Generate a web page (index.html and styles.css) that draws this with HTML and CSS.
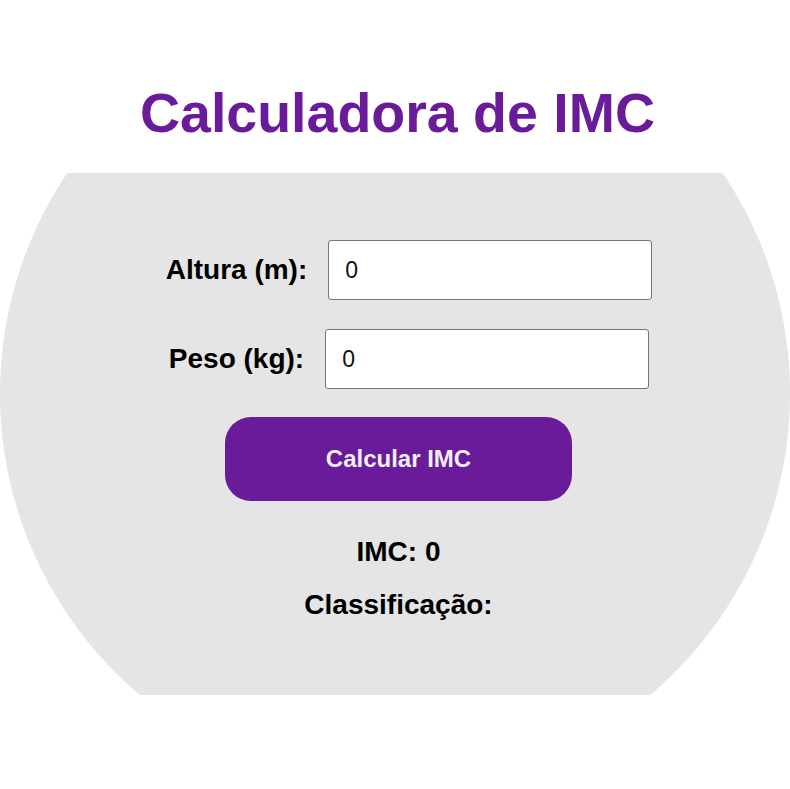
FILE: index.html
```html
<!DOCTYPE html>
<html lang="pt-BR">
<head>
<meta charset="utf-8">
<title>Calculadora de IMC</title>
<link rel="stylesheet" href="styles.css">
</head>
<body>
  <h1 class="title">Calculadora de IMC</h1>
  <main class="panel">
    <div class="form">
      <div class="row">
        <label class="label" for="altura">Altura (m):</label>
        <input class="field" id="altura" type="number" value="0">
      </div>
      <div class="row">
        <label class="label" for="peso">Peso (kg):</label>
        <input class="field" id="peso" type="number" value="0">
      </div>
      <button class="btn" type="button">Calcular IMC</button>
      <p class="result result-imc">IMC: 0</p>
      <p class="result result-class">Classificação:</p>
    </div>
  </main>
</body>
</html>
```
FILE: styles.css
```css
* { box-sizing: border-box; }
html, body {
  margin: 0;
  padding: 0;
  background: #ffffff;
}
body {
  font-family: "Liberation Sans", Arial, sans-serif;
  color: #000;
}
.title {
  margin: 81px 0 0 0;
  padding-left: 5px;
  height: 92px;
  font-size: 55.5px;
  line-height: 64px;
  font-weight: 700;
  color: #6a1b9a;
  text-align: center;
}
.panel {
  height: 522px;
  width: 100%;
  background: radial-gradient(circle at 395px 220.5px, #e5e5e5 394.5px, rgba(229,229,229,0) 395.5px);
  padding-top: 67px;
}
.form {
  display: flex;
  flex-direction: column;
  align-items: center;
  padding-left: 7px;
}
.row {
  display: flex;
  align-items: center;
  justify-content: center;
  gap: 21px;
  padding-left: 21px;
  width: 100%;
  margin-bottom: 29px;
}
.row + .row { margin-bottom: 28px; }
.label {
  font-size: 28px;
  font-weight: 700;
  line-height: 32px;
}
.field {
  width: 324px;
  height: 60px;
  border: 1px solid #767676;
  border-radius: 3px;
  background: #fff;
  padding: 0 16px;
  font-family: "Liberation Sans", Arial, sans-serif;
  font-size: 23px;
  color: #111;
  outline: none;
}
.btn {
  width: 347px;
  height: 84px;
  border: none;
  border-radius: 26px;
  background: #6a1b9a;
  color: #efeff2;
  font-family: "Liberation Sans", Arial, sans-serif;
  font-size: 24px;
  font-weight: 700;
  margin: 0 0 35px 0;
  padding: 0;
}
.result {
  margin: 0;
  font-size: 28px;
  font-weight: 700;
  line-height: 32px;
}
.result-imc { margin-bottom: 21px; }
```
